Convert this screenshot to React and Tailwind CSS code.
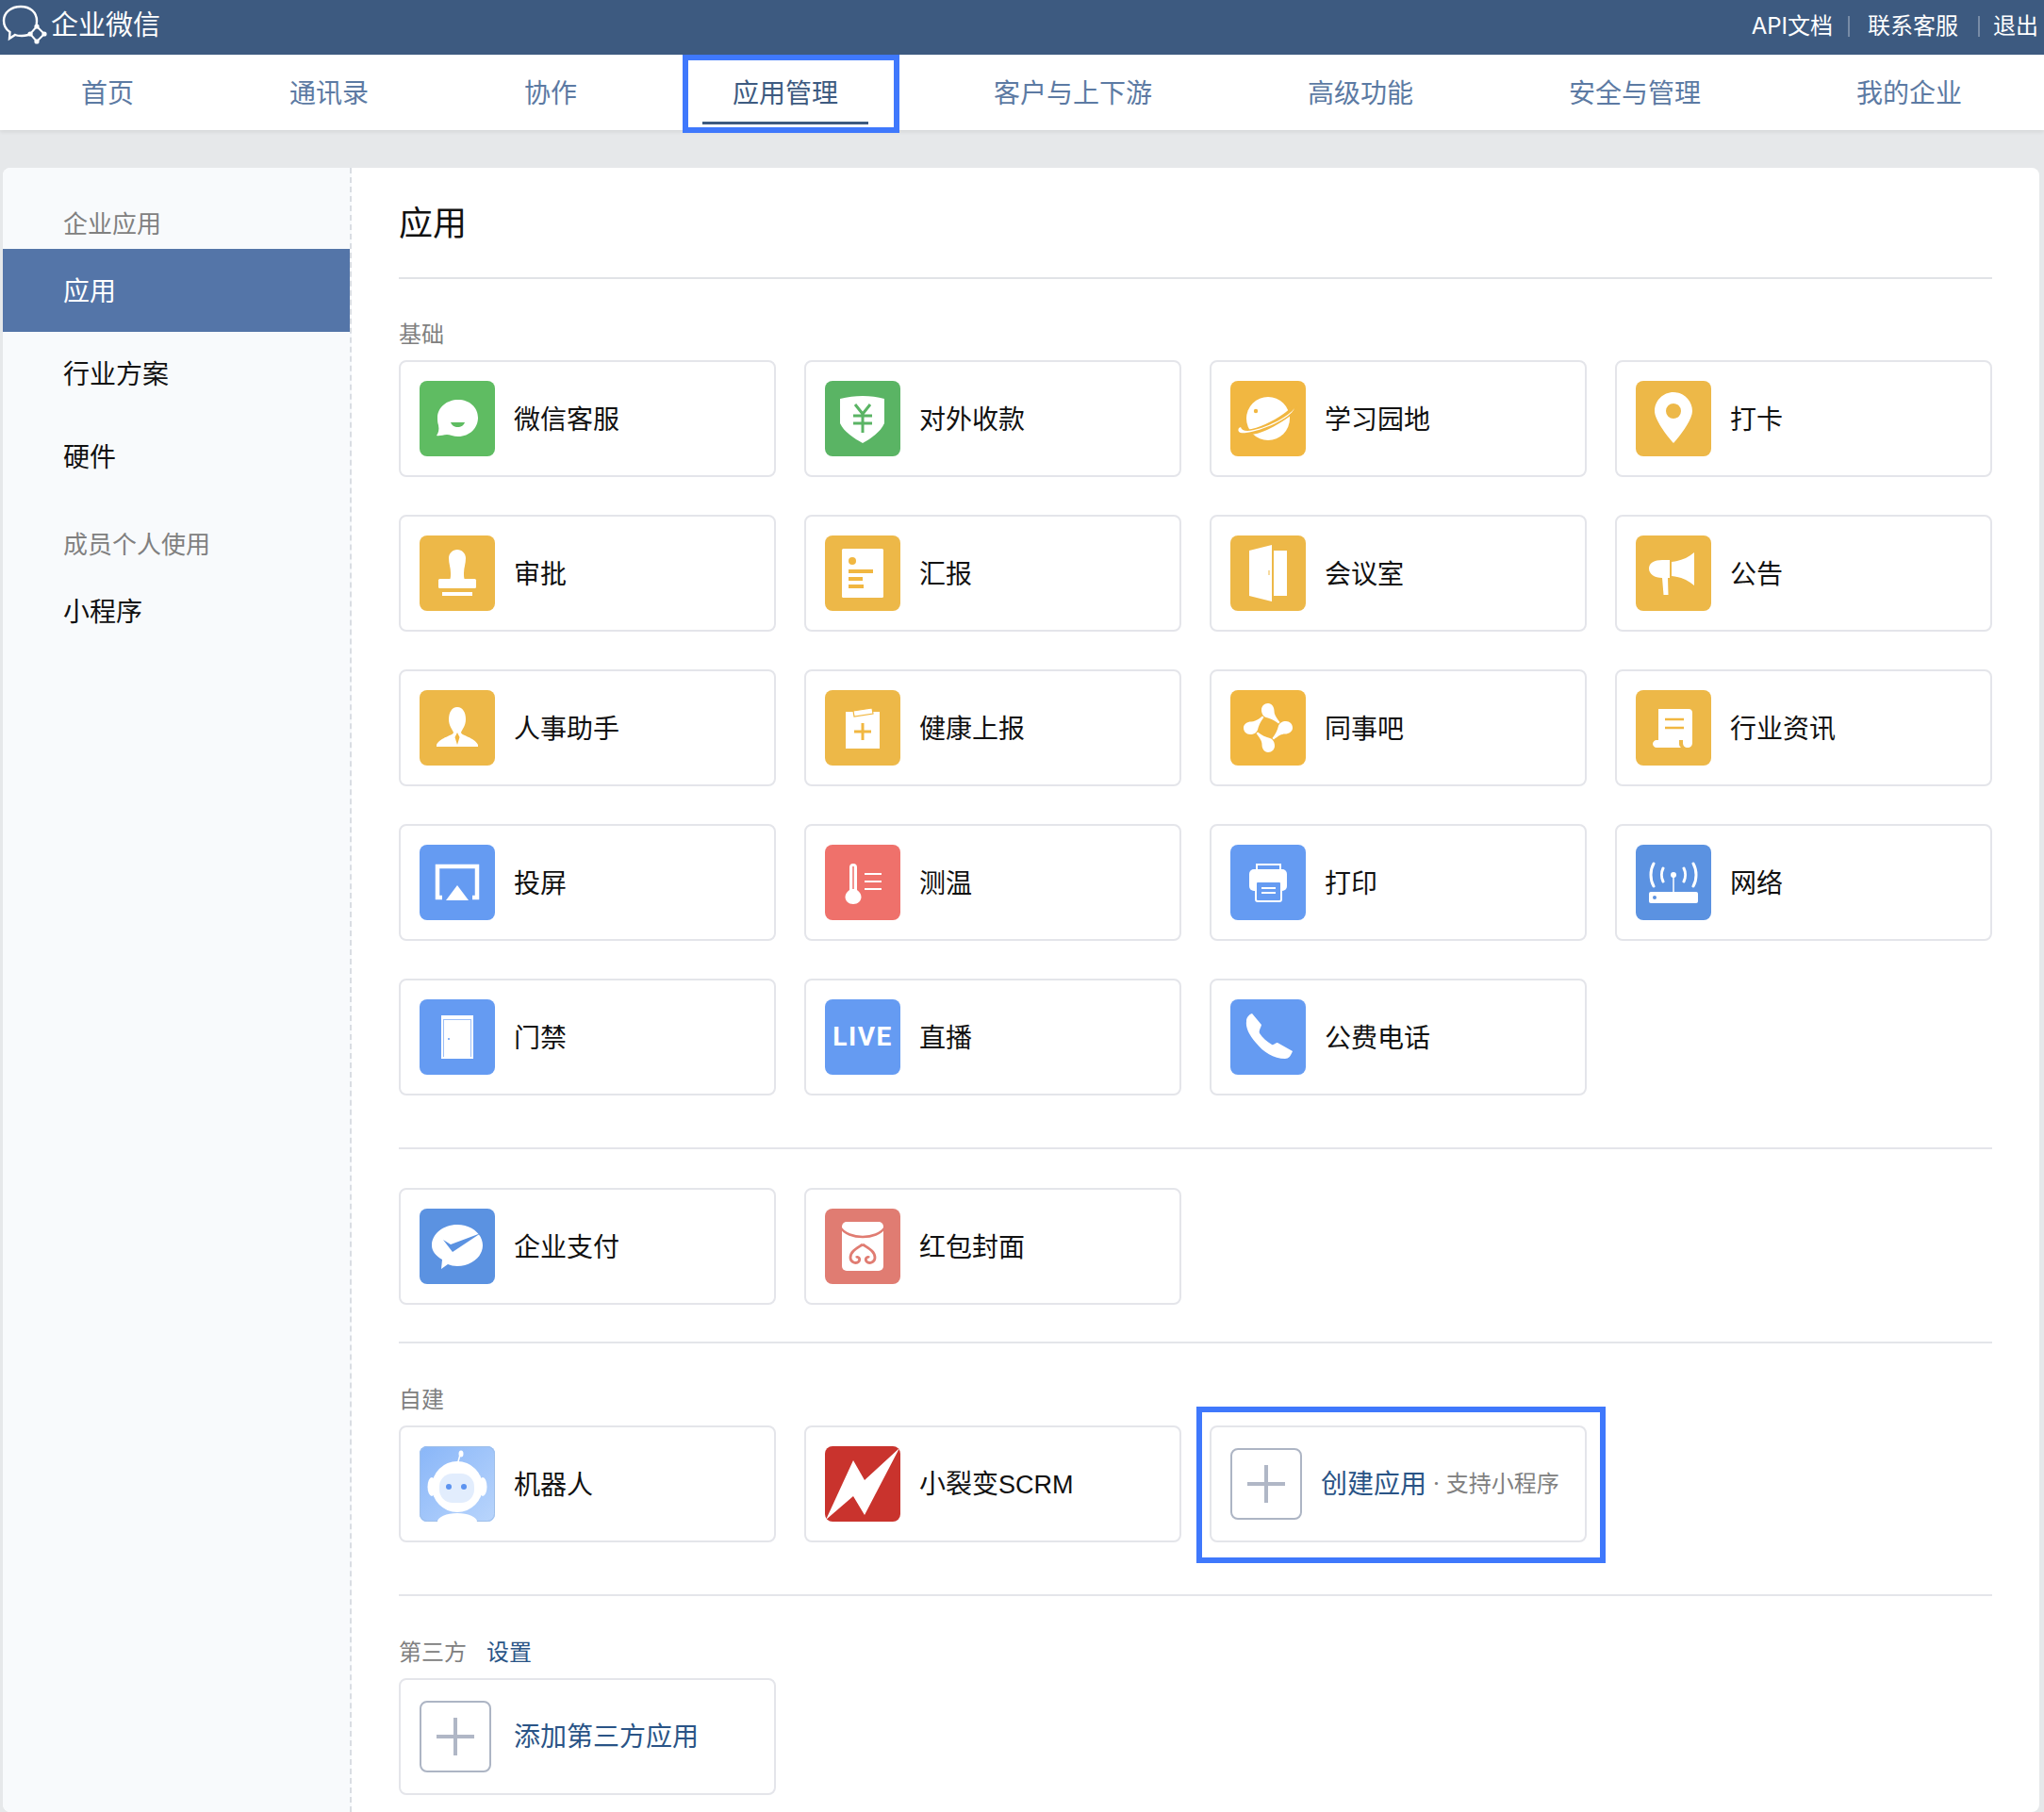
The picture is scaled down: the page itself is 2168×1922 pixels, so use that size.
const Y = '#f1b741'
const G = '#5fbc62'
const B = '#659bf2'

const NAV = ['首页', '通讯录', '协作', '应用管理', '客户与上下游', '高级功能', '安全与管理', '我的企业']

function Logo() {
  return (
    <svg width="50" height="44" viewBox="0 0 50 44" className="absolute left-[1px] top-[4px]" fill="none">
      <path d="M33 31c-3 2-7 3-11 3-3 0-5 0-7-1l-6 4 .5-7C5 27 3 22 3 18 3 9 11 3 21 3s17 6 17 15c0 1 0 3-.5 4" stroke="#fff" strokeWidth="2.4" />
      <path d="M38 24l8 8-8 8-7-8z" stroke="#fff" strokeWidth="2" />
      <circle cx="38" cy="24" r="2.6" fill="#fff" />
      <circle cx="31" cy="32" r="2.6" fill="#fff" />
      <circle cx="46" cy="32" r="2.6" fill="#fff" />
      <circle cx="38" cy="40" r="2.6" fill="#fff" />
    </svg>
  )
}

// app icons, all drawn on an 80x80 tile
const ICONS = {
  kefu: (
    <>
      <path d="M41 20c12 0 21 8 21 19s-9 20-21 20c-5 0-9-2-12-2-4 0-8 2-11 1 2-3 3-6 2-11-1-3-1-5-1-8 0-11 10-19 22-19z" fill="#fff" />
      <path d="M33 44h15c-1 3-4 5-7.500 5S34 47 33 44z" fill={G} />
    </>
  ),
  pay: (
    <>
      <path d="M16 19c8-2 16-3 24-3s16 1 23 3v26c-4 9-14 16-23 21-9-5-20-12-24-21z" fill="#fff" />
      <path d="M32 25l8 10 8-10M30 37h20M30 45h20M40 35v20" stroke="#5ab464" strokeWidth="3" fill="none" />
    </>
  ),
  planet: (
    <>
      <circle cx="40" cy="40" r="23" fill="#fff" />
      <path d="M6 52c8 6 25 1 38-6 13-7 24-15 24-20" stroke={Y} strokeWidth="6" fill="none" />
      <path d="M9 50c-2 4 1 6 8 5 16-2 47-15 51-26-5 8-28 20-43 23-8 2-13 1-14-3z" fill="#fff" />
      <circle cx="27" cy="32" r="2.200" fill={Y} />
    </>
  ),
  pin: (
    <path fillRule="evenodd" d="M40 12c11 0 20 9 20 20 0 9-12 25-20 34-8-9-20-25-20-34 0-11 9-20 20-20zm0 12a8 8 0 100 16 8 8 0 000-16z" fill="#fff" />
  ),
  stamp: (
    <>
      <path d="M40 15c5 0 9 4 9 9 0 6-2 10-2 16 0 3 0 5 1 7H32c1-2 1-4 1-7 0-6-2-10-2-16 0-5 4-9 9-9z" fill="#fff" />
      <rect x="20" y="46" width="40" height="10" rx="1.500" fill="#fff" />
      <rect x="24" y="60" width="32" height="4" fill="#fff" />
    </>
  ),
  report: (
    <>
      <rect x="18" y="14" width="44" height="52" rx="1.500" fill="#fff" />
      <circle cx="29" cy="27" r="4" fill={Y} />
      <rect x="25" y="36" width="26" height="4" fill={Y} />
      <rect x="25" y="44" width="15" height="4" fill={Y} />
      <rect x="25" y="52" width="16" height="4" fill={Y} />
    </>
  ),
  door: (
    <>
      <path d="M20 16l24-6v60l-24-6z" fill="#fff" />
      <rect x="46" y="16" width="14" height="48" fill="#fff" />
      <rect x="40.500" y="37" width="1" height="5" fill={Y} />
    </>
  ),
  horn: (
    <>
      <path d="M62 18v35c-7-6-15-9-24-10V28c9-1 17-4 24-10z" fill="#fff" />
      <path d="M36 26v19h-2l.5 18h-5L28 45c-8 0-14-4-14-10s6-9 14-9z" fill="#fff" />
    </>
  ),
  person: (
    <>
      <path d="M40 18c-6 0-9 6-9 13 0 7 4 11 5 14 0 3-14 5-18 13v2h44v-2c-4-8-18-10-18-13 1-3 5-7 5-14 0-7-3-13-9-13z" fill="#fff" />
      <path d="M40 45l2.500 5-2.500 8-2.500-8z" fill={Y} />
    </>
  ),
  health: (
    <>
      <path d="M22 23h36v39H22z" fill="#fff" />
      <path d="M30 22l20-3 1 6-20 3z" fill="#fff" stroke={Y} strokeWidth="1.200" />
      <path d="M40 35v18M31 44h18" stroke={Y} strokeWidth="3" />
    </>
  ),
  circle: (
    <>
      {[0, 90, 180, 270].map(r => (
        <path key={r} transform={`rotate(${r} 40 40)`} d="M40 14c4 0 6.500 4 6.500 8 0 4 2 7 6 12l-1.500 1.500C47 32 42 30 38 29c-3-1-5-4-5-8 0-4 3-7 7-7z" fill="#fff" />
      ))}
    </>
  ),
  news: (
    <>
      <path d="M24 20h32c3 0 4 2 4 4v32c0 3-2 5-5 5s-5-2-5-5v-3H24z" fill="#fff" />
      <path d="M18 57c0-2 2-4 4-4h24v4c0 2 1 3 2 4H22c-2 0-4-2-4-4z" fill="#fff" />
      <path d="M31 31h20M31 40h20" stroke={Y} strokeWidth="2.500" />
    </>
  ),
  cast: (
    <>
      <path d="M24 56h-5v-33h42v33h-5" stroke="#fff" strokeWidth="4.500" fill="none" />
      <path d="M40 43l12 16H28z" fill="#fff" />
    </>
  ),
  temp: (
    <>
      <path d="M26 24a4 4 0 018 0v24c3 2 4.500 5 4.500 7.500 0 4-3.500 7.500-8.500 7.500s-8.500-3.500-8.500-7.500c0-2.500 1.500-5.500 4.500-7.500z" fill="#fff" />
      <path d="M30 23v24" stroke="#ef716b" strokeWidth="1.500" />
      <path d="M42 31h18M42 39h18M42 47h18" stroke="#fff" strokeWidth="2" />
    </>
  ),
  print: (
    <>
      <rect x="28" y="21" width="25" height="12" fill="none" stroke="#fff" strokeWidth="2" />
      <rect x="20" y="26" width="40" height="23" rx="5" fill="#fff" />
      <rect x="27" y="39" width="27" height="21" rx="2" fill="#659bf2" stroke="#fff" strokeWidth="2" />
      <path d="M33 46h15M33 51h15" stroke="#fff" strokeWidth="1.800" />
    </>
  ),
  net: (
    <>
      <rect x="14" y="50" width="52" height="12" rx="2" fill="#fff" />
      <circle cx="20" cy="56" r="2" fill="#5b92e1" />
      <path d="M40 32v18" stroke="#fff" strokeWidth="1.500" />
      <circle cx="40" cy="32" r="3" fill="#fff" />
      <path d="M19 20c-4 7-4 17 0 24M29 25c-2 4-2 10 0 14M61 20c4 7 4 17 0 24M51 25c2 4 2 10 0 14" stroke="#fff" strokeWidth="3" strokeLinecap="round" fill="none" />
    </>
  ),
  gate: (
    <>
      <rect x="23" y="17" width="34" height="46" fill="#fff" />
      <path d="M25 21.500h30M25.500 22v39M54.500 22v39" stroke="#9dbff7" strokeWidth="1" fill="none" />
      <circle cx="31" cy="42" r="1" fill={B} />
    </>
  ),
  phone: (
    <path d="M23 15l10 12c-1 4-3 6-2 9 3 5 8 9 13 12 2 1 4-2 6-2l16 9c-2 5-4 8-8 8-12 0-23-7-31-17-7-8-11-16-10-23 0-4 3-7 6-8z" fill="#fff" />
  ),
  wepay: (
    <>
      <path d="M40 17c15 0 27 10 27 22S55 61 40 61c-4 0-7-1-10-2l-7 5 1-10c-7-4-11-9-11-15 0-12 12-22 27-22z" fill="#fff" />
      <path d="M25 33l8 5 32-12-30 20z" fill="#5b92e1" />
    </>
  ),
  packet: (
    <>
      <rect x="18" y="14" width="44" height="52" rx="5" fill="#fff" />
      <path d="M16 19c4 8 15 11 24 11s20-3 24-11" stroke="#e07c72" strokeWidth="2.500" fill="none" />
      <path d="M40 38c-6 4-13 7-13 14 0 5 6 7 9 4 2-3-1-6-3-4M40 38c6 4 13 7 13 14 0 5-6 7-9 4-2-3 1-6 3-4" stroke="#e07c72" strokeWidth="2.800" fill="none" />
    </>
  ),
  robot: (
    <>
      <defs>
        <linearGradient id="robot-bg" x1="0" y1="0" x2="1" y2="1">
          <stop offset="0" stopColor="#89b6f8" />
          <stop offset="1" stopColor="#b9d5fc" />
        </linearGradient>
      </defs>
      <rect width="80" height="80" fill="url(#robot-bg)" />
      <rect x="0.500" y="0.500" width="79" height="79" rx="8" fill="none" stroke="#9fbfe8" />
      <ellipse cx="40" cy="80" rx="21" ry="9" fill="#fff" />
      <path d="M43 9l-3 11" stroke="#fff" strokeWidth="1.500" />
      <ellipse cx="44" cy="8" rx="2.500" ry="3.500" fill="#fff" />
      <ellipse cx="13" cy="43" rx="4.500" ry="10" fill="#fff" />
      <ellipse cx="67" cy="43" rx="4.500" ry="10" fill="#fff" />
      <circle cx="40" cy="43" r="27" fill="#fff" />
      <rect x="21" y="29" width="37" height="31" rx="14" fill="#e2edfd" />
      <circle cx="31" cy="43" r="3" fill="#5c93f0" />
      <circle cx="47" cy="43" r="3" fill="#5c93f0" />
    </>
  ),
  bolt: <polygon points="79,2 42,36 30,15 1,78 30,53 42,73" fill="#fff" />,
}

function AppIcon({ name, color }) {
  return (
    <svg viewBox="0 0 80 80" className="w-20 h-20 rounded-lg shrink-0" style={{ background: color }}>
      {ICONS[name]}
    </svg>
  )
}

function LiveIcon() {
  return (
    <div className="w-20 h-20 rounded-lg shrink-0 bg-[#659bf2] flex items-center justify-center text-white font-bold text-[28px] tracking-[1.5px] font-['Roboto',sans-serif]">
      LIVE
    </div>
  )
}

const BASIC = [
  { name: '微信客服', icon: 'kefu', color: G },
  { name: '对外收款', icon: 'pay', color: '#5ab464' },
  { name: '学习园地', icon: 'planet', color: Y },
  { name: '打卡', icon: 'pin', color: '#edb848' },
  { name: '审批', icon: 'stamp', color: '#edb848' },
  { name: '汇报', icon: 'report', color: '#edb848' },
  { name: '会议室', icon: 'door', color: '#edb848' },
  { name: '公告', icon: 'horn', color: '#edb848' },
  { name: '人事助手', icon: 'person', color: '#edb848' },
  { name: '健康上报', icon: 'health', color: '#edb848' },
  { name: '同事吧', icon: 'circle', color: Y },
  { name: '行业资讯', icon: 'news', color: '#edb848' },
  { name: '投屏', icon: 'cast', color: B },
  { name: '测温', icon: 'temp', color: '#ef716b' },
  { name: '打印', icon: 'print', color: B },
  { name: '网络', icon: 'net', color: '#5b92e1' },
  { name: '门禁', icon: 'gate', color: B },
  { name: '直播', live: true },
  { name: '公费电话', icon: 'phone', color: B },
]

function Card({ children, className = '' }) {
  return (
    <div className={`relative h-[124px] border-2 border-[#e4e5ea] rounded-lg bg-white pl-5 flex items-center ${className}`}>
      {children}
    </div>
  )
}

function AppCard({ app }) {
  return (
    <Card>
      {app.live ? <LiveIcon /> : <AppIcon name={app.icon} color={app.color} />}
      <span className="ml-5 pt-[1px] text-[28px] text-[#111]">{app.name}</span>
    </Card>
  )
}

function PlusBox() {
  return (
    <div className="relative w-[76px] h-[76px] shrink-0 rounded-lg border-2 border-[#adb5c4]">
      <div className="absolute left-[16px] top-[34px] w-10 h-1 bg-[#b0b7c6]" />
      <div className="absolute left-[34px] top-[16px] w-1 h-10 bg-[#b0b7c6]" />
    </div>
  )
}

function Grid({ children }) {
  return <div className="grid grid-cols-4 gap-x-[30px] gap-y-10">{children}</div>
}

function SideLabel({ children, className = '' }) {
  return <div className={`h-[54px] flex items-center pl-16 text-[26px] text-[#808080] ${className}`}>{children}</div>
}

function SideItem({ children, active }) {
  return (
    <div className={`h-[88px] flex items-center pl-16 pt-[1px] text-[28px] ${active ? 'bg-[#5475a8] text-white' : 'text-[#111]'}`}>
      {children}
    </div>
  )
}

export default function App() {
  return (
    <div className="min-h-[1922px] bg-[#e6e8ea] font-['Inter','Noto_Sans_CJK_SC',sans-serif]">
      <header className="relative h-[58px] bg-[#3d5a80] text-white flex items-start justify-between">
        <Logo />
        <div className="pl-[54px] pt-[3px] h-[50px] flex items-center text-[29px]">企业微信</div>
        <div className="flex items-center h-[54px] pt-[1px] pr-[6px] text-[24px]">
          <span>API文档</span>
          <span className="ml-4 mr-[19px] w-[2px] h-[22px] bg-white/30" />
          <span>联系客服</span>
          <span className="ml-[21px] mr-[14px] w-[2px] h-[22px] bg-white/30" />
          <span>退出</span>
        </div>
      </header>

      <nav className="relative h-20 bg-white shadow-[0_2px_4px_rgba(0,0,0,0.08)] pl-[86px] flex items-center gap-[165px] text-[28px] text-[#5c7aa3]">
        {NAV.map(t => (
          <div key={t} className={`relative h-full pt-[1px] flex items-center ${t === '应用管理' ? 'text-[#3d5a80]' : ''}`}>
            {t}
            {t === '应用管理' && (
              <>
                <div className="absolute -left-8 -right-8 bottom-[6px] h-[3px] bg-[#3d5a80]" />
                <div className="absolute -left-[53px] -right-[65px] top-0 -bottom-[3px] border-[6px] border-[#3f78fc]" />
              </>
            )}
          </div>
        ))}
      </nav>

      <div className="mt-10 ml-[3px] mr-[5px] bg-white rounded-lg overflow-hidden flex">
        <aside className="w-[370px] shrink-0 bg-[#f8fafc] border-r-2 border-dashed border-[#d9dde3] pt-8">
          <SideLabel>企业应用</SideLabel>
          <SideItem active>应用</SideItem>
          <SideItem>行业方案</SideItem>
          <SideItem>硬件</SideItem>
          <SideLabel className="mt-[22px]">成员个人使用</SideLabel>
          <SideItem>小程序</SideItem>
        </aside>

        <main className="flex-1 px-[50px] pb-[18px]">
          <div className="h-[118px] pt-[1px] flex items-center border-b-2 border-[#e1e3e7] text-[36px] text-[#111]">应用</div>

          <div className="pt-[43px] mb-3 h-[74px] text-[24px] leading-8 text-[#808080]">基础</div>
          <Grid>
            {BASIC.map(a => <AppCard key={a.name} app={a} />)}
          </Grid>

          <div className="mt-[55px] mb-[41px] border-t-2 border-[#e4e5ea]" />
          <Grid>
            <AppCard app={{ name: '企业支付', icon: 'wepay', color: '#5b92e1' }} />
            <AppCard app={{ name: '红包封面', icon: 'packet', color: '#e07c72' }} />
          </Grid>

          <div className="mt-[39px] border-t-2 border-[#e4e5ea]" />
          <div className="pt-11 mb-3 h-[75px] text-[24px] leading-8 text-[#808080]">自建</div>
          <Grid>
            <AppCard app={{ name: '机器人', icon: 'robot', color: '#89b6f8' }} />
            <Card>
              <AppIcon name="bolt" color="#c9332d" />
              <span className="ml-5 pt-[1px] text-[28px] text-[#111] font-['Liberation_Sans','Noto_Sans_CJK_SC',sans-serif]">小裂变<span className="text-[27px]">SCRM</span></span>
            </Card>
            <Card>
              <PlusBox />
              <span className="ml-5 text-[28px] text-[#2a5486]">创建应用</span>
              <span className="ml-[7px] text-[24px] text-[#808080]">· 支持小程序</span>
              <div className="absolute -left-4 -right-[22px] -top-[22px] -bottom-[24px] border-[6px] border-[#3f78fc]" />
            </Card>
          </Grid>

          <div className="mt-[55px] border-t-2 border-[#e4e5ea]" />
          <div className="pt-11 mb-[11px] h-[76px] text-[24px] leading-8 text-[#808080]">
            第三方<span className="ml-[21px] text-[#2a5486]">设置</span>
          </div>
          <Grid>
            <Card>
              <PlusBox />
              <span className="ml-6 text-[28px] text-[#2a5486]">添加第三方应用</span>
            </Card>
          </Grid>
        </main>
      </div>
    </div>
  )
}
